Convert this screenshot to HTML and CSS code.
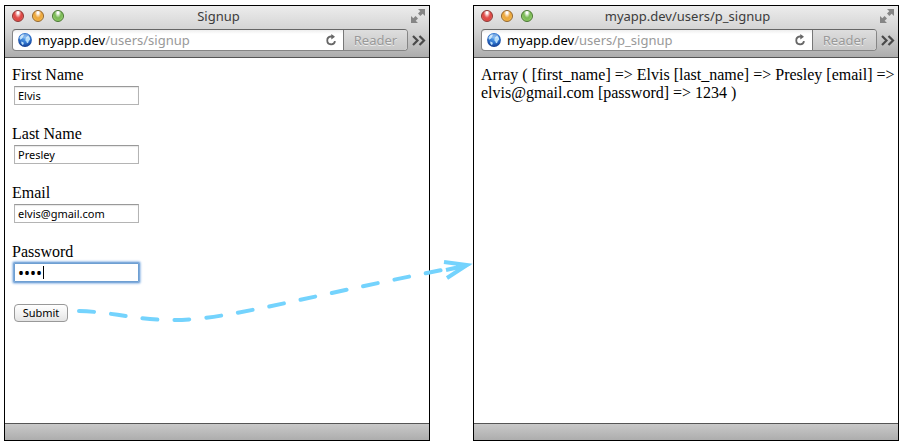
FILE: index.html
```html
<!DOCTYPE html>
<html lang="en">
<head>
<meta charset="utf-8">
<title>Signup</title>
<link rel="stylesheet" href="styles.css">
</head>
<body>
<svg class="defs" width="0" height="0" aria-hidden="true">
  <defs>
    <radialGradient id="sea" cx="50%" cy="35%" r="65%">
      <stop offset="0" stop-color="#5aa5ee"/><stop offset=".6" stop-color="#2b6fca"/><stop offset="1" stop-color="#123b8e"/>
    </radialGradient>
    <symbol id="globe" viewBox="0 0 14 14">
      <circle cx="7" cy="7" r="6.9" fill="url(#sea)"/>
      <path d="M1.4 4.6 3 2.4 5.400 1.2 5.800 2.600 4.800 4.200 4 5.800 2 6.800zM8.200 4.200 10 2.800 11.800 4.400 12.200 6.600 10.800 8 10.200 9.800 9 10.200 8.400 8.400 7.400 7.600 7.400 6zM3.200 8.400l2.200.8.4 1.600-1 1.400L3.400 10.600z" fill="#b9def8"/>
      <ellipse cx="7" cy="3.2" rx="4.4" ry="2.2" fill="#fff" opacity=".3"/>
    </symbol>
    <symbol id="reload" viewBox="0 0 12 12">
      <path d="M8.2 2.500H5.800a3.900 3.900 0 1 0 4.200 4.600" fill="none" stroke="#666" stroke-width="1.800"/>
      <path d="M6.300 0 10 2.800 6.300 5.600z" fill="#666"/>
    </symbol>
    <symbol id="expand" viewBox="0 0 14 14">
      <path d="M7 0h7v7l-2.300-2.300L9.400 7 7 4.600l2.300-2.300zM0 7l2.300 2.300L4.600 7 7 9.400l-2.300 2.300L7 14H0z" fill="#858585"/>
    </symbol>
    <symbol id="more" viewBox="0 0 14 11">
      <path d="M1 1l4.500 4.500L1 10M7.500 1 12 5.500 7.500 10" fill="none" stroke="#4a4a4a" stroke-width="2.200"/>
    </symbol>
  </defs>
</svg>
<main class="windows">
  <section class="window">
    <header class="chrome">
      <div class="titlebar">
        <div class="lights"><button class="light red" aria-label="Close"></button><button class="light amber" aria-label="Minimize"></button><button class="light green" aria-label="Zoom"></button></div>
        <h1 class="title">Signup</h1>
        <button class="icon-button expand" aria-label="Full screen"><svg width="14" height="14"><use href="#expand"/></svg></button>
      </div>
      <div class="toolbar">
        <div class="address">
          <svg width="14" height="14"><use href="#globe"/></svg>
          <span class="url">myapp.dev<span class="path">/users/signup</span></span>
          <button class="icon-button" aria-label="Reload"><svg width="12" height="12"><use href="#reload"/></svg></button>
          <button class="reader" disabled>Reader</button>
        </div>
        <button class="icon-button" aria-label="More"><svg width="14" height="11"><use href="#more"/></svg></button>
      </div>
    </header>
    <div class="page">
      <form class="form">
        <div class="field"><label for="first">First Name</label><input class="text" id="first" type="text" value="Elvis"></div>
        <div class="field"><label for="last">Last Name</label><input class="text" id="last" type="text" value="Presley"></div>
        <div class="field"><label for="email">Email</label><input class="text" id="email" type="text" value="elvis@gmail.com"></div>
        <div class="field password"><label for="password">Password</label><input class="text focused" id="password" type="password" value="1234"><span class="caret"></span></div>
        <button class="submit" type="button">Submit</button>
      </form>
    </div>
    <footer class="status"></footer>
  </section>
  <section class="window">
    <header class="chrome">
      <div class="titlebar">
        <div class="lights"><button class="light red" aria-label="Close"></button><button class="light amber" aria-label="Minimize"></button><button class="light green" aria-label="Zoom"></button></div>
        <h1 class="title">myapp.dev/users/p_signup</h1>
        <button class="icon-button expand" aria-label="Full screen"><svg width="14" height="14"><use href="#expand"/></svg></button>
      </div>
      <div class="toolbar">
        <div class="address">
          <svg width="14" height="14"><use href="#globe"/></svg>
          <span class="url">myapp.dev<span class="path">/users/p_signup</span></span>
          <button class="icon-button" aria-label="Reload"><svg width="12" height="12"><use href="#reload"/></svg></button>
          <button class="reader" disabled>Reader</button>
        </div>
        <button class="icon-button" aria-label="More"><svg width="14" height="11"><use href="#more"/></svg></button>
      </div>
    </header>
    <div class="page">
      <p class="output">Array ( [first_name] =&gt; Elvis [last_name] =&gt; Presley [email] =&gt; elvis@gmail.com [password] =&gt; 1234 )</p>
    </div>
    <footer class="status"></footer>
  </section>
</main>
<svg class="arrow" width="400" height="70" viewBox="76 256 400 70" aria-hidden="true">
  <g fill="none" stroke="#74d3fd" stroke-width="4">
    <path d="M79 311C115 312 132 320 175 320C225 320 300 298 442 270" stroke-linecap="round" stroke-dasharray="15 17"/>
    <path d="M446 270 464 266"/>
    <path d="M444 262 467 265 447 278"/>
  </g>
  <path d="M456 263 471 265 456 272z" fill="#74d3fd"/>
</svg>
</body>
</html>
```

FILE: styles.css
```css
* { box-sizing: border-box; }

body {
  margin: 0;
  background: #fff;
  color: #000;
  font: 16px/18px "Liberation Serif", serif;
}

button, input {
  margin: 0;
  font-family: "Noto Sans", sans-serif;
}

.defs { position: absolute; }

.windows {
  display: grid;
  grid-template-columns: 1fr 1fr;
  gap: 43px;
  min-height: 100vh;
  padding: 5px 6px 3px 4px;
}

.window {
  display: flex;
  flex-direction: column;
  min-width: 0;
  border: 1px solid #000;
}

.chrome {
  padding-bottom: 6px;
  border-bottom: 1px solid #555;
  background: linear-gradient(#ececec, #d2d2d2 50%, #adadad);
  font-family: "Noto Sans", sans-serif;
}

.titlebar {
  display: grid;
  grid-template-columns: 60px 1fr 60px;
  align-items: center;
  height: 23px;
  padding: 0 4px 3px 7px;
}

.lights { display: flex; gap: 8px; }

.light {
  width: 12px;
  height: 12px;
  padding: 0;
  border: 1px solid #555;
  border-radius: 50%;
}

.red { border-color: #8c3431; background: radial-gradient(ellipse at 50% 15%, #fff 0 10%, #e2514e 45%, #dd4643 65%, #ffa6a0); }
.amber { border-color: #94642a; background: radial-gradient(ellipse at 50% 15%, #fff 0 10%, #eda63c 45%, #efae40 65%, #ffec98); }
.green { border-color: #47752f; background: radial-gradient(ellipse at 50% 15%, #fff 0 10%, #79b854 45%, #83c25e 65%, #d0f8ac); }

.title {
  margin: 0;
  color: #3c3c3c;
  font-size: 13px;
  font-weight: 400;
  line-height: 18px;
  text-align: center;
  white-space: nowrap;
}

.icon-button {
  display: flex;
  padding: 0;
  border: 0;
  background: none;
}

.expand { justify-self: end; }

.toolbar {
  display: flex;
  align-items: center;
  gap: 4px;
  padding: 0 3px 0 7px;
}

.address {
  display: flex;
  flex: 1;
  align-items: center;
  height: 22px;
  padding-left: 5px;
  border: 1px solid #858585;
  border-top-color: #666;
  border-radius: 4px;
  background: linear-gradient(#eee, #fff 4px);
}

.url {
  flex: 1;
  margin-left: 6px;
  font-size: 13px;
  white-space: nowrap;
}

.path { color: #999; }

.reader {
  align-self: stretch;
  width: 64px;
  margin-left: 6px;
  padding: 0;
  border: 0;
  border-left: 1px solid #777;
  border-radius: 0 3px 3px 0;
  background: linear-gradient(#dedede, #c7c7c7);
  color: #999;
  font-size: 13px;
  text-shadow: 0 1px #eee;
}

.page { flex: 1; padding: 8px 2px 8px 7px; }

.form { display: flex; flex-direction: column; align-items: flex-start; }

.field {
  display: flex;
  flex-direction: column;
  gap: 2px;
  margin-bottom: 20px;
}

.text {
  width: 125px;
  height: 19px;
  margin-left: 2px;
  padding: 0 3px;
  border: 1px solid #b4b4b4;
  border-top-color: #999;
  outline: 0;
  background: #fff;
  box-shadow: inset 0 1px 1px #e8e8e8;
  font-size: 11px;
}

.focused {
  border-color: #6e9fd2;
  border-radius: 1px;
  box-shadow: 0 0 0 1px #80abdb, 0 0 2px 2px #a7c7eb;
  font-size: 16px;
}

.password { position: relative; }

.caret {
  position: absolute;
  bottom: 3px;
  left: 31px;
  width: 1px;
  height: 13px;
  background: #000;
}

.submit {
  width: 54px;
  height: 18px;
  margin: 2px 0 0 2px;
  padding: 0;
  border: 1px solid #999;
  border-radius: 4px;
  background: linear-gradient(#fff, #f3f3f3 50%, #e4e4e4);
  font-size: 11px;
  line-height: 16px;
}

.output { margin: 0; }

.status {
  height: 17px;
  border-top: 1px solid #555;
  background: linear-gradient(#c9c9c9, #adadad);
}

.arrow {
  position: absolute;
  top: 256px;
  left: 76px;
  pointer-events: none;
}
```
